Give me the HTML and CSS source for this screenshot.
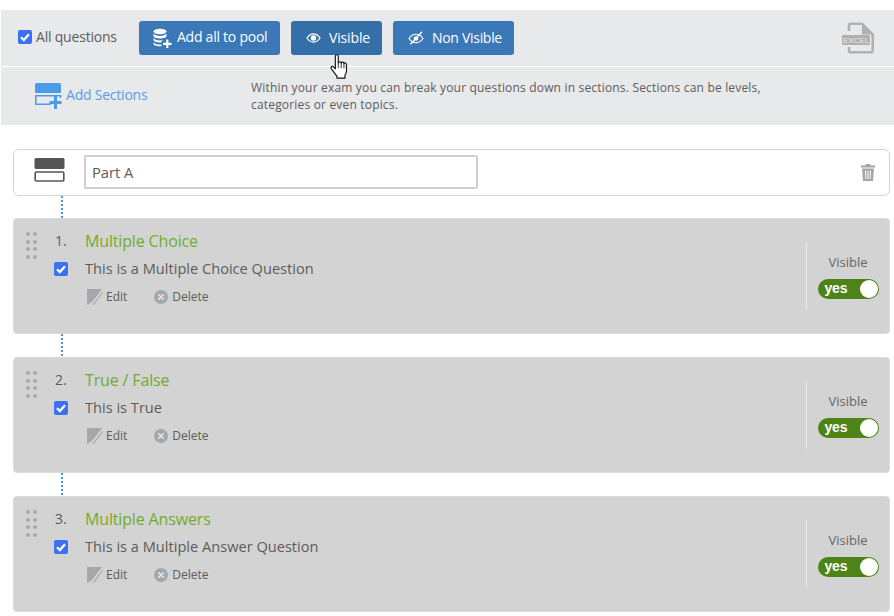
FILE: index.html
```html
<!DOCTYPE html>
<html lang="en">
<head>
<meta charset="utf-8">
<title>Exam sections</title>
<link rel="stylesheet" href="styles.css">
</head>
<body>
<div class="page">
  <div class="toolbar">
    <label class="all"><input type="checkbox" class="check" checked> <span>All questions</span></label>
    <button class="btn btn-pool">
      <svg width="20" height="20" viewBox="0 0 20 20"><g fill="#fff"><ellipse cx="8" cy="3.500" rx="6.500" ry="2.800"/><path d="M1.500 5.500c1 1.700 3.500 2.400 6.500 2.400s5.500-.7 6.500-2.400v2.300c0 1.700-3 2.800-6.500 2.800s-6.500-1.100-6.500-2.800z"/><path d="M1.500 10c1 1.700 3.500 2.400 6.500 2.400 1 0 2-.1 2.900-.3l-1.400 1v1.300c-.5.100-1 .1-1.500.1-3.500 0-6.500-1.100-6.500-2.800z"/><path d="M1.500 14.300c1 1.700 3.500 2.400 8 2.300v1.600c-4.800.3-8-.8-8-2.500z"/><path d="M14.200 11.500h2.200v3.200h3.200v2.200h-3.200v3.100h-2.200v-3.100h-3.200v-2.200h3.200z"/></g></svg>
      <span>Add all to pool</span>
    </button>
    <button class="btn btn-visible">
      <svg width="15" height="10" viewBox="0 0 16 11"><path fill="none" stroke="#fff" stroke-width="1.300" d="M.8 5.500C3 2.300 5.300 1 8 1s5 1.300 7.200 4.500C13 8.700 10.700 10 8 10S3 8.700.8 5.500z"/><circle cx="8" cy="5.500" r="3" fill="#fff"/></svg>
      <span>Visible</span>
    </button>
    <button class="btn btn-hidden">
      <svg width="16" height="14" viewBox="0 0 17 15"><path fill="none" stroke="#fff" stroke-width="1.200" d="M1 8c2-3 4.500-4.500 7.500-4.500S14 5 16 8c-2 3-4.500 4.500-7.500 4.500S3 11 1 8z"/><circle cx="8.500" cy="8" r="2.500" fill="#fff"/><path stroke="#fff" stroke-width="1.500" d="M15 .8L2.500 14.200"/></svg>
      <span>Non Visible</span>
    </button>
    <svg class="excel" width="33" height="32" viewBox="0 0 33 32">
      <path fill="none" stroke="#b0b0b0" stroke-width="2.500" d="M7 9V3.300c0-1 .6-1.500 1.500-1.500H20l10.700 10.700v16.200c0 1-.6 1.500-1.500 1.500H8.500c-1 0-1.500-.6-1.500-1.500V25"/>
      <path fill="#b0b0b0" d="M20 1.500v11h11z"/>
      <rect x="0" y="13" width="28" height="10" rx="1" fill="#b0b0b0"/>
      <text x="14" y="21.300" text-anchor="middle" class="excel-text">EXCEL</text>
    </svg>
  </div>
  <div class="sections-bar">
    <a class="add-link">
      <svg width="27" height="26" viewBox="0 0 27 26"><rect x="0" y="0" width="26" height="10" rx="1.500" fill="#4c9aea"/><path fill="none" stroke="#4c9aea" stroke-width="1.500" d="M25.500 15v-2.300H.8v8.600h15"/><path fill="#4c9aea" d="M19 13h3v5h4.500v3H22v5h-3v-5h-4.500v-3H19z"/></svg>
      <span>Add Sections</span>
    </a>
    <p class="help">Within your exam you can break your questions down in sections. Sections can be levels, categories or even topics.</p>
  </div>

  <div class="content">
    <div class="section-row">
      <svg class="section-icon" width="31" height="24" viewBox="0 0 31 24"><rect x=".5" y="0" width="30" height="11" rx="1.500" fill="#555"/><rect x="1.200" y="14" width="28.600" height="9" rx="1" fill="none" stroke="#555" stroke-width="1.600"/></svg>
      <input class="section-name" type="text" value="Part A">
      <svg class="trash" width="14" height="17" viewBox="0 0 14 17"><path fill="#a5a5a5" d="M5 0h4l.8 1.500H14v2H0v-2h4.200zM1 4.500h12L12 17H2zM4 6.500l.4 8.500h1L5 6.500zM6.500 6.500V15h1V6.500zM9 6.500L8.600 15h1l.4-8.500z" fill-rule="evenodd"/></svg>
    </div>

    <div class="connector"></div>
    <article class="card">
      <div class="grip"><i></i><i></i><i></i><i></i><i></i><i></i><i></i><i></i></div>
      <div class="marks"><span class="num">1.</span><input type="checkbox" class="check" checked></div>
      <div class="body">
        <h3>Multiple Choice</h3>
        <p class="q">This is a Multiple Choice Question</p>
        <div class="actions">
          <span class="act"><svg width="16" height="16" viewBox="0 0 16 16"><path fill="#a4a8ac" d="M0 0h15L5 13 0 16z"/><path stroke="#a4a8ac" stroke-width="1.200" d="M15.500 3.500L6 16"/></svg>Edit</span>
          <span class="act"><svg width="14" height="14" viewBox="0 0 14 14"><circle cx="7" cy="7" r="7" fill="#a4a8ac"/><path stroke="#e6e6e6" stroke-width="1.600" d="M4.300 4.300l5.400 5.400M9.700 4.300l-5.400 5.400"/></svg>Delete</span>
        </div>
      </div>
      <div class="vis">
        <span>Visible</span>
        <div class="toggle"><b>yes</b><i></i></div>
      </div>
    </article>

    <div class="connector tall"></div>
    <article class="card">
      <div class="grip"><i></i><i></i><i></i><i></i><i></i><i></i><i></i><i></i></div>
      <div class="marks"><span class="num">2.</span><input type="checkbox" class="check" checked></div>
      <div class="body">
        <h3>True / False</h3>
        <p class="q">This is True</p>
        <div class="actions">
          <span class="act"><svg width="16" height="16" viewBox="0 0 16 16"><path fill="#a4a8ac" d="M0 0h15L5 13 0 16z"/><path stroke="#a4a8ac" stroke-width="1.200" d="M15.500 3.500L6 16"/></svg>Edit</span>
          <span class="act"><svg width="14" height="14" viewBox="0 0 14 14"><circle cx="7" cy="7" r="7" fill="#a4a8ac"/><path stroke="#e6e6e6" stroke-width="1.600" d="M4.300 4.300l5.400 5.400M9.700 4.300l-5.400 5.400"/></svg>Delete</span>
        </div>
      </div>
      <div class="vis">
        <span>Visible</span>
        <div class="toggle"><b>yes</b><i></i></div>
      </div>
    </article>

    <div class="connector tall"></div>
    <article class="card">
      <div class="grip"><i></i><i></i><i></i><i></i><i></i><i></i><i></i><i></i></div>
      <div class="marks"><span class="num">3.</span><input type="checkbox" class="check" checked></div>
      <div class="body">
        <h3>Multiple Answers</h3>
        <p class="q">This is a Multiple Answer Question</p>
        <div class="actions">
          <span class="act"><svg width="16" height="16" viewBox="0 0 16 16"><path fill="#a4a8ac" d="M0 0h15L5 13 0 16z"/><path stroke="#a4a8ac" stroke-width="1.200" d="M15.500 3.500L6 16"/></svg>Edit</span>
          <span class="act"><svg width="14" height="14" viewBox="0 0 14 14"><circle cx="7" cy="7" r="7" fill="#a4a8ac"/><path stroke="#e6e6e6" stroke-width="1.600" d="M4.300 4.300l5.400 5.400M9.700 4.300l-5.400 5.400"/></svg>Delete</span>
        </div>
      </div>
      <div class="vis">
        <span>Visible</span>
        <div class="toggle"><b>yes</b><i></i></div>
      </div>
    </article>
  </div>

  <svg class="cursor" width="19" height="25" viewBox="0 0 18 24"><path fill="#fff" stroke="#111" stroke-width="1.100" stroke-linejoin="round" d="M5 2.200c0-2 2.800-2 2.800 0v6.300c.2-1.500 2.700-1.500 2.800.2.300-1.300 2.600-1.200 2.700.5.500-1 2.400-.8 2.400 1v5.800c0 2-.6 3-1.400 4.300v2.800H6.500v-1.800C5 19 3.500 17.500 1.200 14.200c-1.100-1.700.7-3 2-1.800L5 14.200z"/><path stroke="#111" stroke-width=".8" d="M7.800 8.500v5M10.600 8.700v5M13.300 9.300v4.500"/></svg>
</div>
</body>
</html>
```

FILE: styles.css
```css
* { box-sizing: border-box; }
html, body { margin: 0; padding: 0; }
body {
  width: 894px;
  height: 616px;
  overflow: hidden;
  background: #fff;
  font-family: "Open Sans", sans-serif;
  color: #5c5c5c;
}
.page { position: relative; padding-top: 10px; height: 616px; overflow: hidden; }
.toolbar {
  margin-left: 1px;
  height: 56px;
  background: #e8e9eb;
  display: flex;
  align-items: center;
  padding-left: 17px;
  padding-right: 19px;
}
.all {
  display: flex;
  align-items: center;
  font-size: 14px;
  letter-spacing: -.2px;
  color: #5c5c5c;
  gap: 4px;
  width: 121px;
  position: relative;
  top: -1px;
}
.all span { position: relative; top: -1px; }
.check {
  appearance: none;
  -webkit-appearance: none;
  width: 14px;
  height: 14px;
  margin: 0;
  flex: none;
  border-radius: 2px;
  background: #3b71f0 url("data:image/svg+xml,%3Csvg xmlns='http://www.w3.org/2000/svg' viewBox='0 0 14 14'%3E%3Cpath fill='none' stroke='%23fff' stroke-width='2.300' d='M3 7.300l2.800 2.800L11 4.300'/%3E%3C/svg%3E") center/14px no-repeat;
}
.btn {
  height: 34px;
  border: 0;
  border-radius: 3px;
  background: #3a78b7;
  color: #fff;
  font-family: "Open Sans", sans-serif;
  font-size: 14px;
  display: flex;
  align-items: center;
  padding: 0;
  margin-right: 11px;
}
.btn span { position: relative; top: -1px; }
.btn-pool { width: 141px; padding-left: 13px; gap: 5px; letter-spacing: -.25px; }
.btn-pool span { top: -2px; }
.btn-visible { width: 91px; padding-left: 15px; gap: 8px; background: #346fa7; letter-spacing: -.15px; }
.btn-hidden { width: 121px; padding-left: 15px; gap: 8px; letter-spacing: -.3px; }
.excel { margin-left: auto; flex: none; }
.excel-text { font-family: "Liberation Sans", sans-serif; font-size: 8px; fill: #e8e9eb; }
.sections-bar {
  margin-top: 1px;
  margin-left: 1px;
  height: 58px;
  background: #e8e9eb;
  display: flex;
  align-items: center;
}
.add-link {
  display: flex;
  align-items: center;
  margin-left: 34px;
  width: 216px;
  font-size: 14px;
  letter-spacing: -.22px;
  color: #5c9bef;
  gap: 4px;
  flex: none;
}
.add-link span { position: relative; top: -2px; }
.help {
  margin: 0;
  width: 560px;
  font-size: 12px;
  line-height: 17px;
  letter-spacing: .18px;
  color: #5c5c5c;
}
.content { padding: 24px 4px 0 13px; }
.section-row {
  height: 47px;
  border: 1px solid #d5d5d5;
  border-radius: 6px;
  display: flex;
  align-items: center;
  padding-left: 20px;
  padding-right: 14px;
  background: #fff;
}
.section-icon { flex: none; margin-bottom: 5px; }
.section-name {
  width: 394px;
  height: 34px;
  margin-left: 19px;
  margin-bottom: 2px;
  padding: 0 6px;
  border: 2px solid #d0d0d0;
  border-radius: 2px;
  font-family: "Open Sans", sans-serif;
  font-size: 14.700px;
  color: #5c5c5c;
  background: #fff;
  outline: 0;
}
.trash { margin-left: auto; }
.connector {
  height: 22px;
  margin-left: 48px;
  width: 2px;
  background-image: linear-gradient(#4a98e8 50%, transparent 50%);
  background-size: 2px 4px;
}
.connector.tall { height: 23px; }
.card {
  position: relative;
  height: 116px;
  background: #d3d3d3;
  border: 1px solid #dcdcdc;
  border-radius: 4px;
  display: flex;
}
.grip {
  width: 11px;
  margin: 13px 0 0 12px;
  display: grid;
  grid-template-columns: 4px 4px;
  grid-auto-rows: 4px;
  column-gap: 2.500px;
  row-gap: 3.700px;
  align-content: start;
  flex: none;
}
.grip i { background: #a9a9a9; border-radius: 50%; }
.marks {
  width: 31px;
  margin-left: 17px;
  flex: none;
  display: flex;
  flex-direction: column;
  padding-top: 12px;
  gap: 12px;
}
.num { font-size: 14px; line-height: 19px; color: #5c5c5c; padding-left: 1px; }
.body { flex: 1; padding-top: 10px; }
h3 {
  margin: 0;
  font-size: 16px;
  line-height: 24px;
  font-weight: 400;
  letter-spacing: -.15px;
  color: #71ac2a;
}
.q { margin: 6px 0 0; font-size: 14.600px; line-height: 19px; color: #5c5c5c; }
.actions { display: flex; gap: 27px; margin-top: 11px; padding-left: 2px; font-size: 12px; line-height: 16px; }
.act { display: flex; align-items: center; gap: 3px; color: #5c5c5c; }
.act + .act { gap: 4px; }
.vis {
  width: 83px;
  height: 68px;
  margin-top: 23px;
  border-left: 1px solid #ececec;
  display: flex;
  flex-direction: column;
  align-items: center;
  padding: 11px 0 0;
  flex: none;
  font-size: 13px;
  line-height: 18px;
  color: #666;
}
.toggle {
  margin-top: 8px;
  width: 61px;
  height: 20px;
  border-radius: 10px;
  background: #4e8318;
  display: flex;
  align-items: center;
  justify-content: space-between;
  padding: 0 1px 0 7px;
  color: #fff;
  flex: none;
}
.toggle b { font-family: "Liberation Sans", sans-serif; font-size: 14px; letter-spacing: -.2px; position: relative; top: -1px; }
.toggle i { width: 18px; height: 18px; background: #fff; border-radius: 50%; }
.cursor { position: absolute; left: 330px; top: 54px; }
```
